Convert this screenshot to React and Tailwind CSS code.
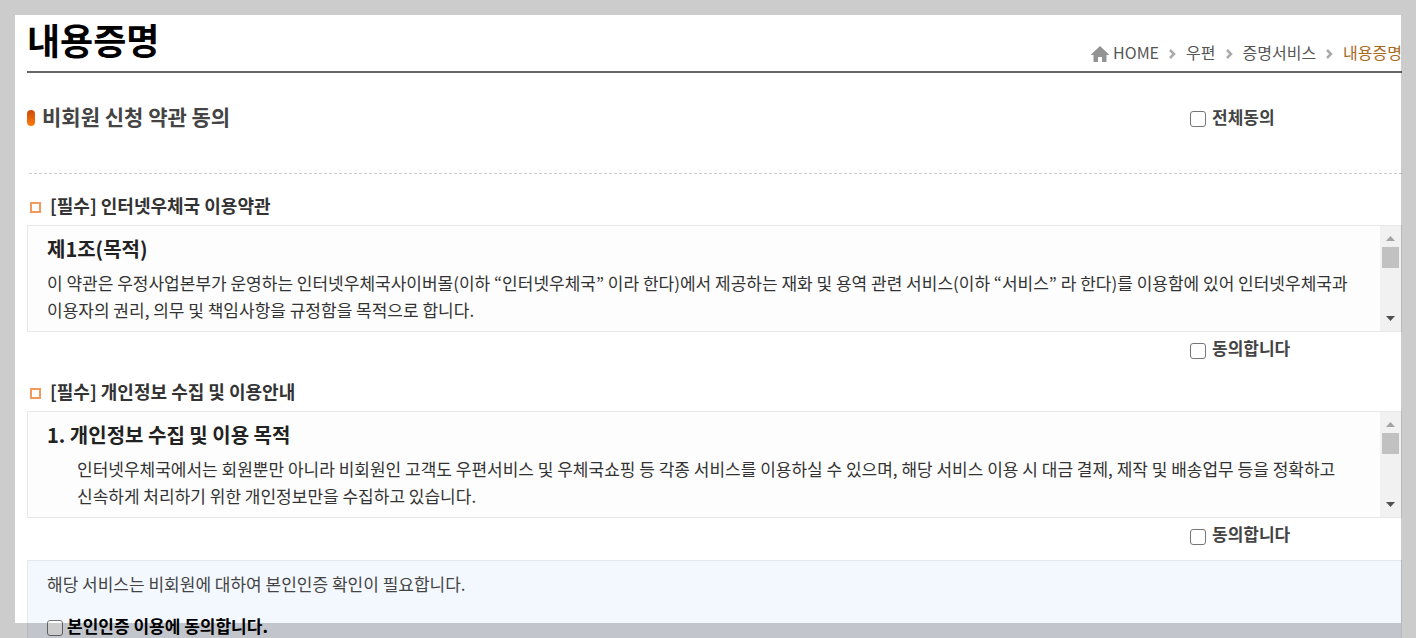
import { Fragment } from 'react';

const breadcrumbs = ['HOME', '우편', '증명서비스', '내용증명'];

const terms = [
  {
    id: 'terms',
    title: '[필수] 인터넷우체국 이용약관',
    heading: '제1조(목적)',
    indent: false,
    lines: [
      '이 약관은 우정사업본부가 운영하는 인터넷우체국사이버몰(이하 “인터넷우체국” 이라 한다)에서 제공하는 재화 및 용역 관련 서비스(이하 “서비스” 라 한다)를 이용함에 있어 인터넷우체국과',
      '이용자의 권리, 의무 및 책임사항을 규정함을 목적으로 합니다.',
    ],
  },
  {
    id: 'privacy',
    title: '[필수] 개인정보 수집 및 이용안내',
    heading: '1. 개인정보 수집 및 이용 목적',
    indent: true,
    lines: [
      '인터넷우체국에서는 회원뿐만 아니라 비회원인 고객도 우편서비스 및 우체국쇼핑 등 각종 서비스를 이용하실 수 있으며, 해당 서비스 이용 시 대금 결제, 제작 및 배송업무 등을 정확하고',
      '신속하게 처리하기 위한 개인정보만을 수집하고 있습니다.',
    ],
  },
];

const Checkbox = ({ id }) => (
  <input
    id={id}
    type="checkbox"
    className="mt-1 size-4 shrink-0 appearance-none rounded-[3px] border border-[#767676] bg-white checked:bg-orange-600"
  />
);

const HomeIcon = () => (
  <svg width="18" height="16" viewBox="0 0 18 16" fill="#939393" aria-hidden="true">
    <path d="M9 0 0 8.500V9h2.500v7H7v-5h4v5h4.500V9H18v-.5z" />
  </svg>
);

const Chevron = () => (
  <svg width="7" height="10" viewBox="0 0 7 10" fill="none" stroke="#aaa" strokeWidth="2.500" aria-hidden="true">
    <path d="m1 1 4 4-4 4" />
  </svg>
);

const ScrollBar = () => (
  <div className="flex w-[21px] shrink-0 flex-col items-center bg-[#f1f1f1]">
    <button type="button" aria-label="위로" className="flex h-[21px] w-full items-center justify-center pt-1">
      <svg width="9" height="5" viewBox="0 0 9 5" fill="#a3a3a3"><path d="M4.500 0 9 5H0z" /></svg>
    </button>
    <div className="h-[21px] w-[17px] bg-[#c1c1c1]" />
    <button type="button" aria-label="아래로" className="mt-auto flex h-[21px] w-full items-center justify-center pb-1">
      <svg width="9" height="5" viewBox="0 0 9 5" fill="#505050"><path d="M0 0h9L4.500 5z" /></svg>
    </button>
  </div>
);

const App = () => {
  return (
    <div className="h-screen overflow-hidden bg-white pt-[15px] pr-[14px] pl-[27px] font-['Noto_Sans_CJK_KR',sans-serif] text-[17px] text-[#333]">

      {/* Title and breadcrumb */}
      <header className="flex h-[58px] items-start justify-between border-b-2 border-[#666]">
        <h1 className="text-[36px] leading-[48px] font-bold text-black">내용증명</h1>
        <nav className="flex items-center pt-[25px] text-[16px] leading-6 text-[#555]">
          <span className="pt-[3px]"><HomeIcon /></span>
          {breadcrumbs.map((name, i) => (
            <Fragment key={name}>
              {i > 0 && <span className="mx-[10px] pt-1"><Chevron /></span>}
              <a href="#" className={i === 0 ? 'ml-1' : i === 3 ? 'text-[#a9691b]' : ''}>{name}</a>
            </Fragment>
          ))}
        </nav>
      </header>

      <main>
        {/* Agree to everything */}
        <div className="flex h-[88px] items-center">
          <span className="mt-[2px] mr-[7px] h-4 w-2 rounded-[4px] bg-linear-to-b from-[#c94a0c] to-[#ff7d08]" />
          <h2 className="pb-[2px] text-[21px] leading-7 font-bold text-[#444]">비회원 신청 약관 동의</h2>
          <div className="ml-auto flex w-[212px] items-center gap-[6px]">
            <Checkbox id="agree-all" />
            <label htmlFor="agree-all" className="leading-6 font-bold text-[#444]">전체동의</label>
          </div>
        </div>
        <hr className="mt-3 mb-3 ml-[2px] border-dashed border-[#ccc]" />

        {/* Terms */}
        {terms.map((t) => (
          <section key={t.id}>
            <div className="flex h-[39px] items-center pl-[3px]">
              <span className="mt-[3px] mr-[9px] size-[11px] border-2 border-[#f29a5c]" />
              <h3 className="pb-[2px] text-[18px] leading-6 font-bold">{t.title}</h3>
            </div>
            <div className="flex h-[107px] border border-[#e8e8e8] bg-[#fdfdfd]">
              <div className="grow overflow-hidden pt-[9px] pl-[19px] whitespace-nowrap">
                <h4 className="mb-[6px] text-[20px] leading-7 font-bold text-[#222]">{t.heading}</h4>
                <p className={t.indent ? 'pl-[30px] leading-[27px]' : 'leading-[27px]'}>
                  {t.lines[0]}<br />{t.lines[1]}
                </p>
              </div>
              <ScrollBar />
            </div>
            <div className="ml-auto flex h-10 w-[212px] items-center gap-[6px] pb-[6px]">
              <Checkbox id={t.id} />
              <label htmlFor={t.id} className="pb-[2px] leading-6 font-bold text-[#444]">동의합니다</label>
            </div>
          </section>
        ))}

        {/* Identity check */}
        <section className="mt-[2px] border border-[#e3e8ed] bg-[#f3f8ff] px-[19px] pt-[11px] pb-6">
          <p className="leading-6 text-[#444]">해당 서비스는 비회원에 대하여 본인인증 확인이 필요합니다.</p>
          <div className="mt-[18px] flex items-center gap-1">
            <Checkbox id="identity" />
            <label htmlFor="identity" className="leading-6 font-bold text-black">본인인증 이용에 동의합니다.</label>
          </div>
        </section>
      </main>

      {/* Dimmed frame over the page */}
      <div className="pointer-events-none fixed inset-0 border-[15px] border-black/20" />
    </div>
  );
};

export default App;
